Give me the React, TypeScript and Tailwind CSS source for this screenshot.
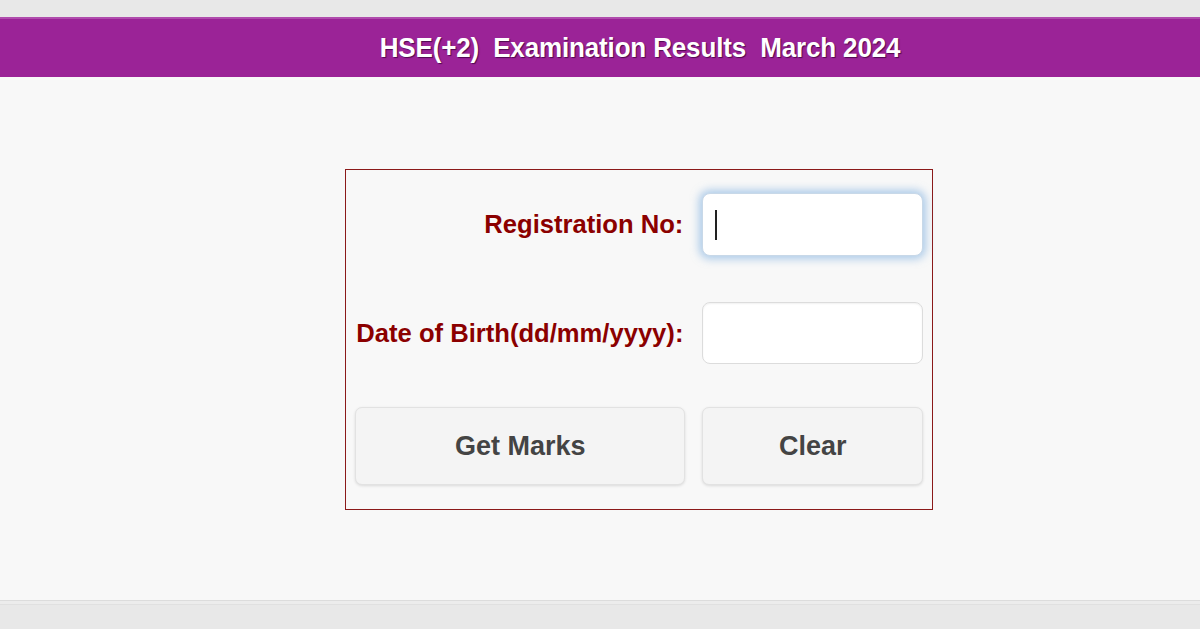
import React from "react";

export default function App() {
  return (
    <div className="min-h-[629px] bg-[#e8e8e8] pt-[17px] font-['Liberation_Sans',Arial,sans-serif]">
      {/* title band */}
      <div className="h-[60px] bg-[#9b2397] border-t-2 border-[#b04cad] flex items-center justify-center pl-[80px]">
        <h1 className="text-white font-bold text-[26px] tracking-[-0.15px] leading-none -mt-[3px] scale-y-[1.08] [text-shadow:1px_1px_1px_rgba(60,0,60,0.8)]">
          HSE(+2)&nbsp; Examination Results&nbsp; March 2024
        </h1>
      </div>

      {/* main area */}
      <div className="h-[524px] bg-[#f8f8f8] border-b border-[#dcdcdc] pt-[92px]">
        <div className="w-[588px] h-[341px] ml-[345px] border border-[#8b1a1a] px-[9px] pt-[23px]">
          <div className="flex items-center">
            <label className="w-[329px] text-right text-[25.6px] font-bold text-[#8b0000]">Registration No:</label>
            <div className="ml-[19px] w-[221px] h-[63px] bg-white rounded-[8px] border border-[#c8d8e8] shadow-[0_0_8px_3px_rgba(110,165,220,0.55)] flex items-center pl-[12px]">
              <span className="w-[1.5px] h-[30px] bg-[#222]" />
            </div>
          </div>

          <div className="flex items-center mt-[46px]">
            <label className="w-[329px] text-right text-[25.6px] font-bold text-[#8b0000] whitespace-nowrap">Date of Birth(dd/mm/yyyy):</label>
            <div className="ml-[19px] w-[221px] h-[62px] bg-white rounded-[8px] border border-[#dcdcdc] shadow-[inset_0_1px_2px_rgba(0,0,0,0.06)]" />
          </div>

          <div className="flex mt-[43px] gap-[17px]">
            <button className="w-[331px] h-[78px] rounded-[7px] bg-[#f4f4f4] border border-[#e2e2e2] shadow-[0_1px_3px_rgba(0,0,0,0.12)] text-[27px] font-bold text-[#444]">
              Get Marks
            </button>
            <button className="w-[221px] h-[78px] rounded-[7px] bg-[#f4f4f4] border border-[#e2e2e2] shadow-[0_1px_3px_rgba(0,0,0,0.12)] text-[27px] font-bold text-[#444]">
              Clear
            </button>
          </div>
        </div>
      </div>
      <div className="h-[4px] border-b border-[#e0e0e0] bg-[#ececec]" />
    </div>
  );
}
